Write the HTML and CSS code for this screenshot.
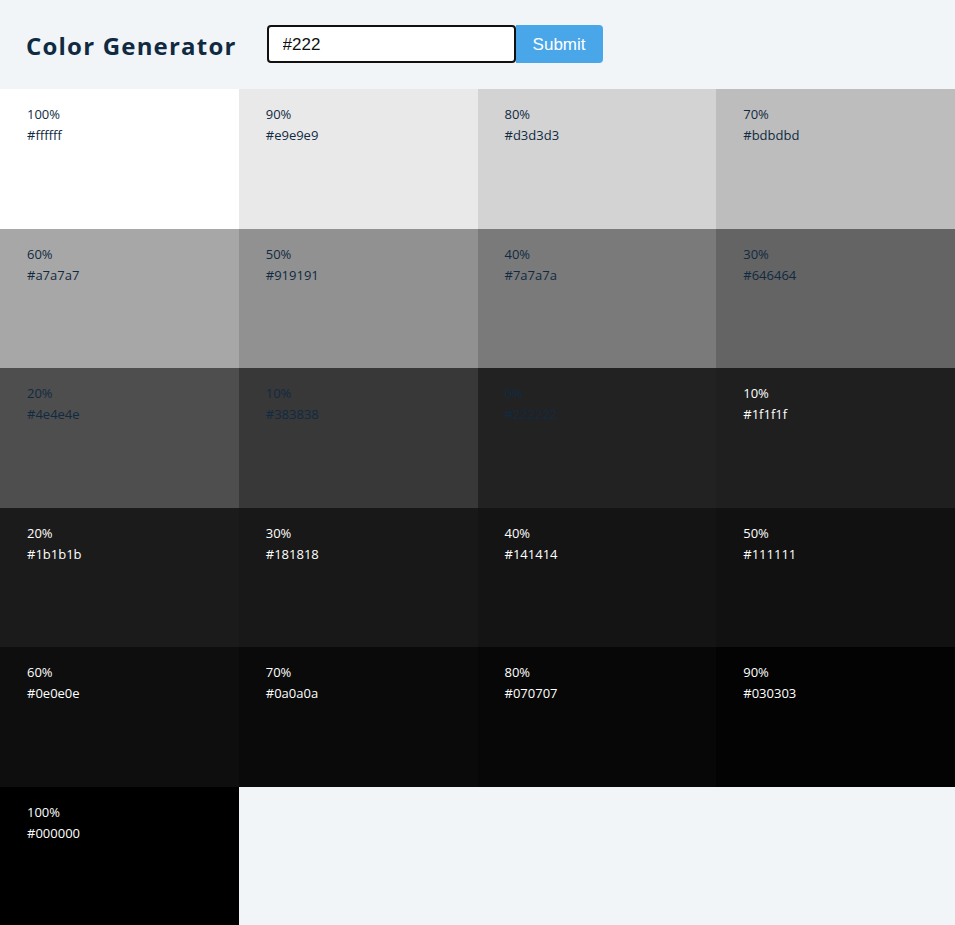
FILE: index.html
```html
<!DOCTYPE html>
<html>
<head>
<meta charset="utf-8">
<link rel="stylesheet" href="styles.css">
</head>
<body>
<header class="top">
  <h1 class="title">Color Generator</h1>
  <form class="form">
    <input class="field" type="text" value="#222">
    <button class="btn" type="button">Submit</button>
  </form>
</header>
<main class="grid">
  <div class="cell" style="background:#ffffff"><p class="pct">100%</p><p class="hex">#ffffff</p></div>
  <div class="cell" style="background:#e9e9e9"><p class="pct">90%</p><p class="hex">#e9e9e9</p></div>
  <div class="cell" style="background:#d3d3d3"><p class="pct">80%</p><p class="hex">#d3d3d3</p></div>
  <div class="cell" style="background:#bdbdbd"><p class="pct">70%</p><p class="hex">#bdbdbd</p></div>
  <div class="cell" style="background:#a7a7a7"><p class="pct">60%</p><p class="hex">#a7a7a7</p></div>
  <div class="cell" style="background:#919191"><p class="pct">50%</p><p class="hex">#919191</p></div>
  <div class="cell" style="background:#7a7a7a"><p class="pct">40%</p><p class="hex">#7a7a7a</p></div>
  <div class="cell" style="background:#646464"><p class="pct">30%</p><p class="hex">#646464</p></div>
  <div class="cell" style="background:#4e4e4e"><p class="pct">20%</p><p class="hex">#4e4e4e</p></div>
  <div class="cell" style="background:#383838"><p class="pct">10%</p><p class="hex">#383838</p></div>
  <div class="cell" style="background:#222222"><p class="pct">0%</p><p class="hex">#222222</p></div>
  <div class="cell light" style="background:#1f1f1f"><p class="pct">10%</p><p class="hex">#1f1f1f</p></div>
  <div class="cell light" style="background:#1b1b1b"><p class="pct">20%</p><p class="hex">#1b1b1b</p></div>
  <div class="cell light" style="background:#181818"><p class="pct">30%</p><p class="hex">#181818</p></div>
  <div class="cell light" style="background:#141414"><p class="pct">40%</p><p class="hex">#141414</p></div>
  <div class="cell light" style="background:#111111"><p class="pct">50%</p><p class="hex">#111111</p></div>
  <div class="cell light" style="background:#0e0e0e"><p class="pct">60%</p><p class="hex">#0e0e0e</p></div>
  <div class="cell light" style="background:#0a0a0a"><p class="pct">70%</p><p class="hex">#0a0a0a</p></div>
  <div class="cell light" style="background:#070707"><p class="pct">80%</p><p class="hex">#070707</p></div>
  <div class="cell light" style="background:#030303"><p class="pct">90%</p><p class="hex">#030303</p></div>
  <div class="cell light" style="background:#000000"><p class="pct">100%</p><p class="hex">#000000</p></div>
</main>
</body>
</html>
```
FILE: styles.css
```css
* { box-sizing: border-box; }
html, body { margin: 0; padding: 0; }
body {
  background: #f1f5f8;
  font-family: "Open Sans", "Noto Sans", sans-serif;
  color: #102a42;
}
.top {
  height: 89px;
  display: flex;
  align-items: center;
  padding: 0 0 0 26px;
}
.title {
  margin: 0;
  padding-top: 2px;
  font-family: "Open Sans", sans-serif;
  font-weight: 700;
  font-size: 24px;
  letter-spacing: 1.2px;
  color: #102a42;
}
.form {
  display: flex;
  margin-left: 30px;
  margin-top: -2px;
}
.field {
  width: 249px;
  height: 38px;
  border: 2px solid #111;
  border-radius: 4px;
  padding: 2px 14px 0;
  font-family: "Liberation Sans", Arial, sans-serif;
  font-size: 17px;
  color: #111;
  background: #fff;
  outline: none;
}
.btn {
  width: 87px;
  height: 38px;
  border: none;
  border-radius: 0 4px 4px 0;
  background: #49a6e9;
  color: #fff;
  font-family: "Liberation Sans", Arial, sans-serif;
  font-size: 17px;
  padding: 2px 0 0;
}
.grid {
  display: grid;
  grid-template-columns: repeat(4, 1fr);
  grid-auto-rows: 139.5px;
}
.cell {
  padding: 15px 27px;
  font-size: 13px;
  color: #102a42;
}
.cell.light { color: #fff; }
.pct, .hex {
  margin: 0;
  line-height: 21px;
}
```
